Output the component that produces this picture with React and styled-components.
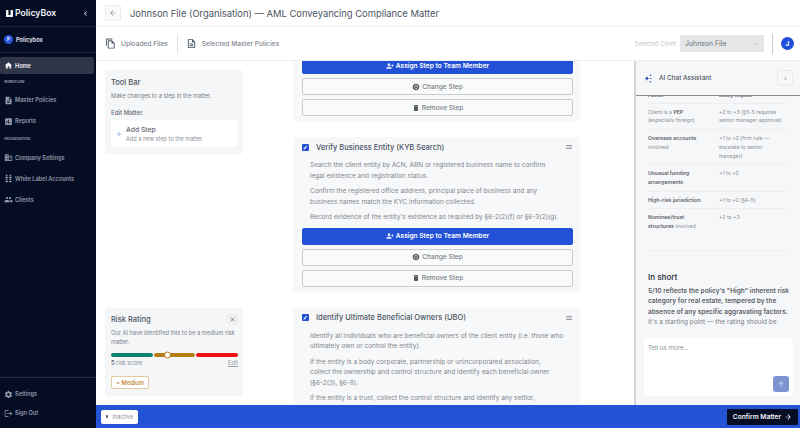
import React from 'react'
import styled, { createGlobalStyle } from 'styled-components'
import {
	MdHome,
	MdDescription,
	MdAssessment,
	MdBusiness,
	MdSettings,
	MdPeople,
	MdLogout,
	MdDelete,
	MdPersonAddAlt1,
	MdOutlineDescription,
	MdOutlineFileCopy,
	MdChangeCircle,
	MdEdit,
	MdMenu,
	MdArrowUpward,
	MdArrowForward,
	MdArrowBack,
	MdClose,
	MdChevronLeft,
	MdChevronRight,
	MdAdd,
	MdExpandMore,
} from 'react-icons/md'

const GlobalStyle = createGlobalStyle`
	* { box-sizing: border-box; }
	html, body, #root { height: 100%; margin: 0; }
	body { font-family: Inter, "Liberation Sans", sans-serif; color: #374151; overflow: hidden; background: #fff; }
`

const Page = styled.div`
	width: 800px;
	height: 428px;
	display: flex;
	overflow: hidden;
`

/* SIDEBAR */
const Sidebar = styled.aside`
	width: 96px;
	flex-shrink: 0;
	background: #050d24;
	display: flex;
	flex-direction: column;
	color: #a3a9b5;
`
const Brand = styled.div`
	height: 27px;
	padding: 0 6px;
	display: flex;
	align-items: center;
	justify-content: space-between;
	border-bottom: 1px solid #1a2236;
	color: #f1f3f6;
	font-size: 8.7px;
	font-weight: 600;
`
const BrandName = styled.div`
	display: flex;
	align-items: center;
	gap: 2px;
`
const BrandMark = styled.svg`
	width: 7px;
	height: 7px;
	fill: #f1f3f6;
`
const Org = styled.div`
	height: 26px;
	padding: 0 4px;
	display: flex;
	align-items: center;
	gap: 3px;
	border-bottom: 1px solid #1a2236;
	font-size: 5.6px;
	font-weight: 700;
	color: #d9dce2;
`
const OrgDot = styled.span`
	width: 9px;
	height: 9px;
	border-radius: 50%;
	background: #2a56e0;
	color: #fff;
	font-size: 4.5px;
	display: flex;
	align-items: center;
	justify-content: center;
`
const NavList = styled.nav`
	flex: 1;
	padding-top: 4px;
	display: flex;
	flex-direction: column;
`
const NavItem = styled.div`
	height: 17px;
	flex-shrink: 0;
	margin: ${(p) => (p.$active ? '0 2px 0 0' : p.$tight ? '1px 2px 1px 0' : '2px 2px 2px 0')};
	padding-left: 3.5px;
	display: flex;
	align-items: center;
	gap: 2.5px;
	border-radius: 2px;
	font-size: 5.6px;
	font-weight: 600;
	background: ${(p) => (p.$active ? '#303648' : 'transparent')};
	color: ${(p) => (p.$active ? '#f4f5f7' : '#959baa')};
	svg { width: 9px; height: 9px; flex-shrink: 0; }
`
const NavHeading = styled.div`
	height: 15.5px;
	flex-shrink: 0;
	display: flex;
	align-items: center;
	font-size: 3.4px;
	font-weight: 700;
	color: #8c92a1;
	padding-left: 4px;
`
const SideFooter = styled.div`
	border-top: 1px solid #262d3f;
	height: 51px;
	padding-top: 6.5px;
	display: flex;
	flex-direction: column;
`
const TeamIcon = styled.svg`
	fill: currentColor;
`

/* MAIN */
const Main = styled.div`
	flex: 1;
	min-width: 0;
	display: flex;
	flex-direction: column;
`
const TitleBar = styled.header`
	height: 27px;
	flex-shrink: 0;
	padding: 0 9px;
	display: flex;
	align-items: center;
	gap: 9px;
	border-bottom: 1px solid #eef0f2;
`
const BackButton = styled.div`
	width: 16px;
	height: 16px;
	border: 1px solid #eceef0;
	border-radius: 2px;
	background: #f8f9fa;
	display: flex;
	align-items: center;
	justify-content: center;
	color: #8a8f98;
	svg { width: 8px; height: 8px; }
`
const Title = styled.h1`
	margin: 0;
	font-size: 9.4px;
	font-weight: 400;
	color: #4b5563;
`
const SubBar = styled.div`
	height: 34px;
	flex-shrink: 0;
	padding: 0 6px 0 9px;
	display: flex;
	align-items: center;
	border-bottom: 1px solid #eef0f2;
`
const Tab = styled.div`
	display: flex;
	align-items: center;
	gap: 5px;
	font-size: 6.6px;
	font-weight: 500;
	color: #7f8792;
	svg { width: 11px; height: 11px; color: #4b5563; }
`
const TabDivider = styled.span`
	width: 1px;
	height: 20px;
	background: #dfe2e6;
	margin: 0 8px 0 9px;
`
const ClientArea = styled.div`
	margin-left: auto;
	display: flex;
	align-items: center;
`
const ClientLabel = styled.span`
	font-size: 5.8px;
	color: #c3c6cb;
	margin-right: 4px;
`
const ClientSelect = styled.div`
	width: 84px;
	height: 17px;
	padding: 0 5px;
	background: #e4e6e8;
	border-radius: 1px;
	display: flex;
	align-items: center;
	justify-content: space-between;
	font-size: 6.9px;
	color: #6b7178;
	svg { width: 6px; height: 6px; color: #9a9ea5; }
`
const ClientDivider = styled.span`
	width: 1px;
	height: 20px;
	background: #c9ccd1;
	margin: 0 8px;
`
const Avatar = styled.div`
	width: 13px;
	height: 13px;
	border-radius: 50%;
	background: #1f4fd8;
	color: #fff;
	font-size: 6.5px;
	font-weight: 700;
	display: flex;
	align-items: center;
	justify-content: center;
`
const Body = styled.div`
	flex: 1;
	min-height: 0;
	display: flex;
`
const ToolColumn = styled.div`
	width: 197px;
	flex-shrink: 0;
	padding: 9px 0 9px 9px;
	display: flex;
	flex-direction: column;
	justify-content: space-between;
`
const Panel = styled.section`
	width: 138px;
	background: #f5f6f7;
	border-radius: 3px;
	padding: 7px 5px 7px 6px;
`
const PanelTitle = styled.div`
	height: 10px;
	font-size: 7.5px;
	font-weight: 500;
	color: #4b5563;
	display: flex;
	align-items: center;
	justify-content: space-between;
`
const PanelText = styled.p`
	margin: 4.5px 0 0;
	font-size: 5.7px;
	line-height: 8.5px;
	color: #7b818b;
`
const EditLabel = styled.div`
	margin-top: 8.5px;
	font-size: 6.1px;
	line-height: 8px;
	font-weight: 500;
	color: #656b75;
`
const AddCard = styled.div`
	margin-top: 3.5px;
	height: 27px;
	background: #fff;
	border-radius: 4px;
	display: flex;
	align-items: center;
	padding: 0 4px;
	gap: 3px;
	svg { width: 8px; height: 8px; color: #7fa0e8; }
`
const AddTitle = styled.div`
	font-size: 6.8px;
	font-weight: 500;
	color: #5f6671;
`
const AddText = styled.div`
	font-size: 5.6px;
	color: #8a9099;
	margin-top: 1.5px;
`
const CloseBox = styled.span`
	width: 11px;
	height: 11px;
	background: #eeeff1;
	border-radius: 2px;
	display: flex;
	align-items: center;
	justify-content: center;
	color: #7d828b;
	svg { width: 7px; height: 7px; }
`
const Track = styled.div`
	position: relative;
	margin-top: 7px;
	display: grid;
	grid-template-columns: 1fr 1fr 1fr;
	gap: 1px;
`
const TrackPart = styled.span`
	height: 3.5px;
	border-radius: 2px;
	background: ${(p) => p.$color};
`
const Thumb = styled.span`
	position: absolute;
	left: 42%;
	top: 50%;
	width: 7px;
	height: 7px;
	transform: translateY(-50%);
	border-radius: 50%;
	background: #fff;
	border: 1px solid #b87c14;
`
const ScoreRow = styled.div`
	margin-top: 3px;
	display: flex;
	justify-content: space-between;
	font-size: 5.6px;
	line-height: 7px;
	color: #8a9099;
	b { color: #5f6671; font-weight: 600; }
	u { color: #9a9ea5; }
`
const MediumTag = styled.div`
	margin-top: 9.5px;
	width: 38px;
	height: 13px;
	border: 1px solid #e5c9a1;
	border-radius: 2px;
	background: #fff;
	color: #b97c22;
	font-size: 5.8px;
	font-weight: 500;
	display: flex;
	align-items: center;
	justify-content: center;
`
const StepsColumn = styled.div`
	width: 287px;
	flex-shrink: 0;
	overflow: hidden;
`
const StepsScroll = styled.div`
	margin-top: -5px;
	display: flex;
	flex-direction: column;
	gap: 16px;
`
const StepCard = styled.article`
	background: #f7f8f9;
	border-radius: 4px;
	padding: 0 7px 5px 9px;
`
const StepHeader = styled.div`
	height: 20px;
	margin-bottom: 3px;
	display: flex;
	align-items: center;
	gap: 7px;
	font-size: 7.5px;
	font-weight: 500;
	color: #4b5563;
`
const CheckBox = styled.span`
	width: 7px;
	height: 7px;
	border-radius: 1px;
	background: #2351d6;
	color: #fff;
	display: flex;
	align-items: center;
	justify-content: center;
	svg { width: 5px; height: 5px; }
`
const MenuIcon = styled(MdMenu)`
	margin-left: auto;
	width: 8px;
	height: 8px;
	color: #80858d;
`
const StepText = styled.p`
	margin: 0 0 5px;
	padding: 0 4px 0 8px;
	font-size: 6.5px;
	line-height: 10.5px;
	color: #7f858e;
`
const StepActionList = styled.div`
	margin-top: 1px;
	display: flex;
	flex-direction: column;
	gap: 4px;
`
const StepButton = styled.div`
	height: 17px;
	border-radius: 2px;
	border: 1px solid ${(p) => (p.$primary ? '#2351d6' : '#c8cbd0')};
	background: ${(p) => (p.$primary ? '#2351d6' : '#f9fafa')};
	color: ${(p) => (p.$primary ? '#fff' : '#7a7f88')};
	font-size: 6.6px;
	font-weight: ${(p) => (p.$primary ? 600 : 500)};
	display: flex;
	align-items: center;
	justify-content: center;
	gap: 2px;
	svg { width: 8px; height: 8px; color: ${(p) => (p.$primary ? '#e6ebfb' : '#555a62')}; }
`
const ChatPanel = styled.aside`
	width: 166px;
	margin-left: auto;
	flex-shrink: 0;
	background: #f6f7f8;
	border-left: 2px solid #d3d5d8;
	display: flex;
	flex-direction: column;
`
const ChatHeader = styled.div`
	height: 35px;
	flex-shrink: 0;
	padding: 0 7px 0 8px;
	display: flex;
	align-items: center;
	gap: 7px;
	font-size: 6.4px;
	font-weight: 500;
	color: #4b5563;
	border-bottom: 1px solid #8a8d92;
`
const SparkIcon = styled.svg`
	width: 8px;
	height: 9px;
	fill: #1f3fae;
`
const ChatToggle = styled.span`
	margin-left: auto;
	width: 16px;
	height: 16px;
	border: 1px solid #e6e8ea;
	border-radius: 3px;
	display: flex;
	align-items: center;
	justify-content: center;
	color: #8f949b;
	svg { width: 7px; height: 7px; }
`
const ChatScroll = styled.div`
	height: 236px;
	flex-shrink: 0;
	overflow: hidden;
	padding: 0 10px 0 12px;
`
const ImpactTable = styled.div`
	margin: -5px 2px 0 0;
	border-bottom: 1px solid #eceef0;
	padding-bottom: 15px;
`
const ImpactRow = styled.div`
	display: grid;
	grid-template-columns: 71px 1fr;
	padding: ${(p) => (p.$head ? '0 0 3px' : '4px 0')};
	border-bottom: ${(p) => (p.$last ? 'none' : '1px solid #eceef0')};
	font-size: 5.2px;
	line-height: 8.7px;
	color: #8b9098;
	b { color: #5b606a; font-weight: 600; }
	> *:first-child { padding-right: 11px; }
	> *:last-child { padding-right: 2px; }
`
const ShortHeading = styled.h3`
	margin: 20px 0 3px;
	font-size: 8px;
	line-height: 12px;
	font-weight: 600;
	color: #3c424d;
`
const ShortText = styled.p`
	margin: 0;
	font-size: 6.5px;
	line-height: 10.5px;
	color: #7b818b;
	b { color: #5b606a; font-weight: 600; }
`
const Composer = styled.div`
	position: relative;
	height: 58px;
	margin: 6px 7px 0 8px;
	padding: 6px 4px;
	background: #fff;
	border-radius: 3px;
	font-size: 6.2px;
	color: #8a9099;
`
const SendButton = styled.span`
	position: absolute;
	right: 4px;
	bottom: 4px;
	width: 16px;
	height: 16px;
	border-radius: 3px;
	background: #7c93cf;
	display: flex;
	align-items: center;
	justify-content: center;
	color: #d3dcf2;
	svg { width: 8px; height: 8px; }
`
const FooterBar = styled.footer`
	height: 23px;
	flex-shrink: 0;
	background: #2453d6;
	padding: 0 2px 0 5px;
	display: flex;
	align-items: center;
	justify-content: space-between;
`
const StatusChip = styled.div`
	height: 14px;
	width: 37px;
	border-radius: 2px;
	background: #fff;
	font-size: 5.6px;
	color: #8b9098;
	display: flex;
	align-items: center;
	justify-content: center;
	gap: 4px;
	&::before {
		content: '';
		width: 2.5px;
		height: 2.5px;
		border-radius: 50%;
		background: #4b5563;
	}
`
const ConfirmButton = styled.div`
	width: 71px;
	height: 16px;
	border-radius: 1px;
	background: #050d24;
	color: #f1f3f6;
	font-size: 6.6px;
	font-weight: 600;
	display: flex;
	align-items: center;
	justify-content: center;
	gap: 3px;
	svg { width: 8px; height: 8px; }
`

function StepActions() {
	return (
		<StepActionList>
			<StepButton $primary>
				<MdPersonAddAlt1 /> Assign Step to Team Member
			</StepButton>
			<StepButton>
				<MdChangeCircle /> Change Step
			</StepButton>
			<StepButton>
				<MdDelete /> Remove Step
			</StepButton>
		</StepActionList>
	)
}

export default function App() {
	return (
		<Page>
			<GlobalStyle />
			<Sidebar>
				<Brand>
					<BrandName>
						<BrandMark viewBox="0 0 10 10">
							<path d="M0 0h3.500v7h3V0H10v10H0z" />
						</BrandMark>
						PolicyBox
					</BrandName>
					<MdChevronLeft size={9} />
				</Brand>
				<Org>
					<OrgDot>P</OrgDot>
					Policybox
				</Org>
				<NavList>
					<NavItem $active>
						<MdHome /> Home
					</NavItem>
					<NavHeading>WORKFLOW</NavHeading>
					<NavItem>
						<MdDescription /> Master Policies
					</NavItem>
					<NavItem>
						<MdAssessment /> Reports
					</NavItem>
					<NavHeading>ORGANISATION</NavHeading>
					<NavItem>
						<MdBusiness /> Company Settings
					</NavItem>
					<NavItem>
						<TeamIcon viewBox="0 0 24 24">
							<circle cx="7" cy="4" r="2.400" />
							<circle cx="17" cy="4" r="2.400" />
							<path d="M3 11c0-2.500 2-3.500 4-3.500s4 1 4 3.500zM13 11c0-2.500 2-3.500 4-3.500s4 1 4 3.500z" />
							<circle cx="7" cy="15" r="2.400" />
							<circle cx="17" cy="15" r="2.400" />
							<path d="M3 22c0-2.500 2-3.500 4-3.500s4 1 4 3.500zM13 22c0-2.500 2-3.500 4-3.500s4 1 4 3.500z" />
						</TeamIcon>
						White Label Accounts
					</NavItem>
					<NavItem>
						<MdPeople /> Clients
					</NavItem>
				</NavList>
				<SideFooter>
					<NavItem $tight>
						<MdSettings /> Settings
					</NavItem>
					<NavItem $tight>
						<MdLogout /> Sign Out
					</NavItem>
				</SideFooter>
			</Sidebar>
			<Main>
				<TitleBar>
					<BackButton>
						<MdArrowBack />
					</BackButton>
					<Title>Johnson File (Organisation) — AML Conveyancing Compliance Matter</Title>
				</TitleBar>
				<SubBar>
					<Tab>
						<MdOutlineFileCopy /> Uploaded Files
					</Tab>
					<TabDivider />
					<Tab>
						<MdOutlineDescription /> Selected Master Policies
					</Tab>
					<ClientArea>
						<ClientLabel>Selected Client</ClientLabel>
						<ClientSelect>
							Johnson File <MdExpandMore />
						</ClientSelect>
						<ClientDivider />
						<Avatar>J</Avatar>
					</ClientArea>
				</SubBar>
				<Body>
					<ToolColumn>
						<Panel>
							<PanelTitle>Tool Bar</PanelTitle>
							<PanelText>Make changes to a step in the matter.</PanelText>
							<EditLabel>Edit Matter</EditLabel>
							<AddCard>
								<MdAdd />
								<div>
									<AddTitle>Add Step</AddTitle>
									<AddText>Add a new step to the matter.</AddText>
								</div>
							</AddCard>
						</Panel>
						<Panel>
							<PanelTitle>
								Risk Rating
								<CloseBox>
									<MdClose />
								</CloseBox>
							</PanelTitle>
							<PanelText>Our AI have identified this to be a medium risk matter.</PanelText>
							<Track>
								<TrackPart $color="#0f7f70" />
								<TrackPart $color="#b87c14" />
								<TrackPart $color="#ee1111" />
								<Thumb />
							</Track>
							<ScoreRow>
								<span>
									<b>5</b> risk score
								</span>
								<u>Edit</u>
							</ScoreRow>
							<MediumTag>= Medium</MediumTag>
						</Panel>
					</ToolColumn>
					<StepsColumn>
						<StepsScroll>
							<StepCard>
								<StepActions />
							</StepCard>
							<StepCard>
								<StepHeader>
									<CheckBox>
										<MdEdit />
									</CheckBox>
									Verify Business Entity (KYB Search)
									<MenuIcon />
								</StepHeader>
								<StepText>
									Search the client entity by ACN, ABN or registered business name to confirm
									<br />
									legal existence and registration status.
								</StepText>
								<StepText>
									Confirm the registered office address, principal place of business and any
									<br />
									business names match the KYC information collected.
								</StepText>
								<StepText>Record evidence of the entity's existence as required by §6-2(2)(f) or §6-3(2)(g).</StepText>
								<StepActions />
							</StepCard>
							<StepCard>
								<StepHeader>
									<CheckBox>
										<MdEdit />
									</CheckBox>
									Identify Ultimate Beneficial Owners (UBO)
									<MenuIcon />
								</StepHeader>
								<StepText>
									Identify all individuals who are beneficial owners of the client entity (i.e. those who
									<br />
									ultimately own or control the entity).
								</StepText>
								<StepText>
									If the entity is a body corporate, partnership or unincorporated association,
									<br />
									collect the ownership and control structure and identify each beneficial owner
									<br />
									(§6-2(3), §6-8).
								</StepText>
								<StepText>
									If the entity is a trust, collect the control structure and identify any settlor,
									<br />
									beneficiaries and trustees.
								</StepText>
							</StepCard>
						</StepsScroll>
					</StepsColumn>
					<ChatPanel>
						<ChatHeader>
							<SparkIcon viewBox="0 0 16 18">
								<path d="M6 4c.6 3 1.800 4.400 5 5-3.200.6-4.400 2-5 5-.6-3-1.800-4.400-5-5 3.200-.6 4.400-2 5-5z" />
								<circle cx="13" cy="2.500" r="1.500" />
								<circle cx="14" cy="9" r="1.200" />
								<circle cx="13" cy="15.500" r="1.500" />
							</SparkIcon>
							AI Chat Assistant
							<ChatToggle>
								<MdChevronRight />
							</ChatToggle>
						</ChatHeader>
						<ChatScroll>
							<ImpactTable>
								<ImpactRow $head>
									<b>Factor</b>
									<b>Likely impact</b>
								</ImpactRow>
								<ImpactRow>
									<span>
										Client is a <b>PEP</b> (especially foreign)
									</span>
									<span>+2 to +3 (§5-5 requires senior manager approval)</span>
								</ImpactRow>
								<ImpactRow>
									<span>
										<b>Overseas accounts</b> involved
									</span>
									<span>+1 to +2 (firm rule — escalate to senior manager)</span>
								</ImpactRow>
								<ImpactRow>
									<b>Unusual funding arrangements</b>
									<span>+1 to +2</span>
								</ImpactRow>
								<ImpactRow>
									<b>High-risk jurisdiction</b>
									<span>+1 to +2 (§4-5)</span>
								</ImpactRow>
								<ImpactRow $last>
									<span>
										<b>Nominee/trust structures</b> involved
									</span>
									<span>+2 to +3</span>
								</ImpactRow>
							</ImpactTable>
							<ShortHeading>In short</ShortHeading>
							<ShortText>
								<b>5/10 reflects the policy's "High" inherent risk category for real estate, tempered by the absence of any specific aggravating factors.</b>{' '}
								It's a starting point — the rating should be
							</ShortText>
						</ChatScroll>
						<Composer>
							Tell us more...
							<SendButton>
								<MdArrowUpward />
							</SendButton>
						</Composer>
					</ChatPanel>
				</Body>
				<FooterBar>
					<StatusChip>Inactive</StatusChip>
					<ConfirmButton>
						Confirm Matter <MdArrowForward />
					</ConfirmButton>
				</FooterBar>
			</Main>
		</Page>
	)
}
